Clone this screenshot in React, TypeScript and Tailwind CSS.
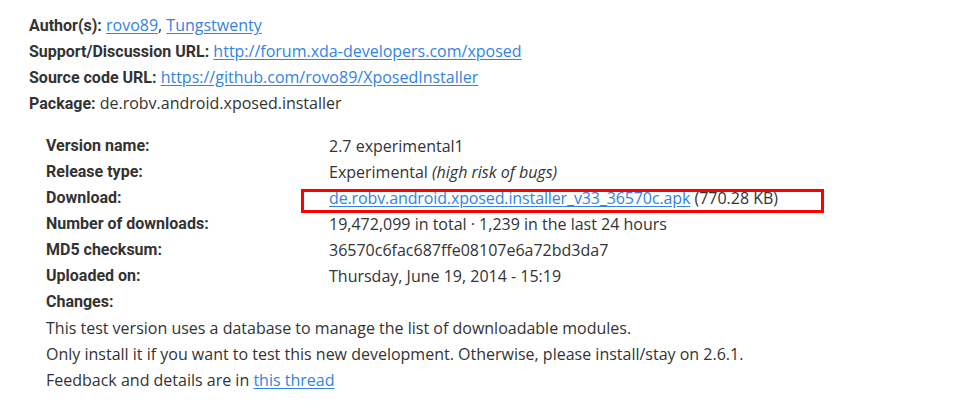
import React from "react";

const linkCls = "text-[#3283e4] underline underline-offset-2";
const labelCls = "font-['Roboto',sans-serif] font-bold";

const rows: { label: string; value: React.ReactNode; boxed?: boolean }[] = [
  { label: "Version name:", value: "2.7 experimental1" },
  {
    label: "Release type:",
    value: (
      <>
        Experimental <i>(high risk of bugs)</i>
      </>
    ),
  },
  {
    label: "Download:",
    boxed: true,
    value: (
      <>
        <a className={`${linkCls} tracking-[-0.12px]`} href="#">
          de.robv.android.xposed.installer_v33_36570c.apk
        </a>{" "}
        (770.28 KB)
      </>
    ),
  },
  { label: "Number of downloads:", value: "19,472,099 in total · 1,239 in the last 24 hours" },
  { label: "MD5 checksum:", value: "36570c6fac687ffe08107e6a72bd3da7" },
  { label: "Uploaded on:", value: "Thursday, June 19, 2014 - 15:19" },
];

const App = () => {
  return (
    <div className="w-[979px] h-[416px] bg-white text-[#333] text-[16px] leading-[26px] font-['Open_Sans',sans-serif] pt-[12px] pl-[29px]">
      <div className="h-[26px]">
        <b className={labelCls}>Author(s):</b>{" "}
        <a className={linkCls} href="#">rovo89</a>,{" "}
        <a className={linkCls} href="#">Tungstwenty</a>
      </div>
      <div className="h-[26px]">
        <b className={labelCls}>Support/Discussion URL:</b>{" "}
        <a className={linkCls} href="#">http://forum.xda-developers.com/xposed</a>
      </div>
      <div className="h-[26px]">
        <b className={labelCls}>Source code URL:</b>{" "}
        <a className={linkCls} href="#">https://github.com/rovo89/XposedInstaller</a>
      </div>
      <div className="h-[26px]">
        <b className={labelCls}>Package:</b> de.robv.android.xposed.installer
      </div>

      <div className="mt-[17px] pl-[17px]">
        {rows.map((r) => (
          <div key={r.label} className="flex h-[26px]">
            <div className={`w-[283px] shrink-0 ${labelCls}`}>{r.label}</div>
            <div className="relative">
              {r.boxed && (
                <span className="absolute left-[-28px] top-[4px] w-[523px] h-[24px] border-[3px] border-[#f00]" />
              )}
              {r.value}
            </div>
          </div>
        ))}
        <div className={labelCls}>Changes:</div>
        <p>This test version uses a database to manage the list of downloadable modules.</p>
        <p>Only install it if you want to test this new development. Otherwise, please install/stay on 2.6.1.</p>
        <p>
          Feedback and details are in{" "}
          <a className={linkCls} href="#">this thread</a>
        </p>
      </div>
    </div>
  );
};

export default App;
